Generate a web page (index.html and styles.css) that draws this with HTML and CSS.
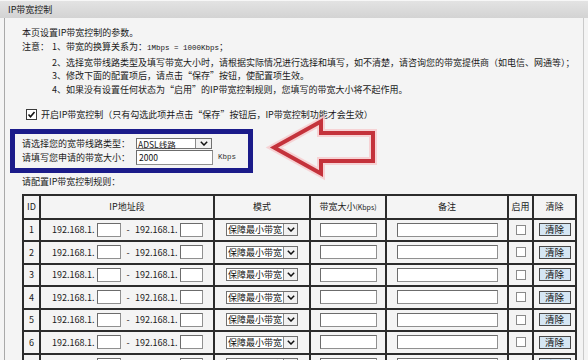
FILE: index.html
```html
<!DOCTYPE html>
<html lang="zh-CN">
<head>
<meta charset="utf-8">
<title>IP带宽控制</title>
<link rel="stylesheet" href="styles.css">
</head>
<body>
<div class="titlebar">IP带宽控制</div>
<div class="panel">
  <p class="line">本页设置IP带宽控制的参数。</p>
  <div class="notes">
    <span class="note-label">注意：</span>
    <div class="note-items">
      <p class="line">1、带宽的换算关系为：<span class="mono">1Mbps = 1000Kbps</span>；</p>
      <p class="line">2、选择宽带线路类型及填写带宽大小时，请根据实际情况进行选择和填写，如不清楚，请咨询您的带宽提供商（如电信、网通等）；</p>
      <p class="line">3、修改下面的配置项后，请点击<span class="q">“</span>保存<span class="q">”</span>按钮，使配置项生效。</p>
      <p class="line">4、如果没有设置任何状态为<span class="q">“</span>启用<span class="q">”</span>的IP带宽控制规则，您填写的带宽大小将不起作用。</p>
    </div>
  </div>
  <div class="enable-row">
    <span class="cb cb-checked"><svg viewBox="0 0 11 11" width="11" height="11"><rect x="0.5" y="0.5" width="10" height="10" fill="#fff" stroke="#3a3a3a"/><polyline points="2.5,5.5 4.5,7.8 8.5,3" fill="none" stroke="#111" stroke-width="1.6"/></svg></span>
    <span>开启IP带宽控制（只有勾选此项并点击<span class="q">“</span>保存<span class="q">”</span>按钮后，IP带宽控制功能才会生效）</span>
  </div>
  <div class="bwbox">
    <div class="bw-grid">
      <span class="bw-label">请选择您的宽带线路类型：</span>
      <span class="sel sel-adsl"><span class="sel-text">ADSL线路</span><span class="sel-btn"><svg viewBox="0 0 8 5" width="8" height="5"><polyline points="0.8,0.8 4,4 7.2,0.8" fill="none" stroke="#111" stroke-width="1.5"/></svg></span></span>
      <span></span>
      <span class="bw-label">请填写您申请的带宽大小：</span>
      <input class="txt txt-bw" type="text" value="2000">
      <span class="unit">Kbps</span>
    </div>
  </div>
  <p class="line rules-title">请配置IP带宽控制规则：</p>
  <table class="rules">
    <colgroup>
      <col class="c-id"><col class="c-ip"><col class="c-mode"><col class="c-bw"><col class="c-note"><col class="c-en"><col class="c-clr">
    </colgroup>
    <thead>
      <tr class="head-row">
        <th>ID</th><th>IP地址段</th><th>模式</th><th>带宽大小<span class="small">(Kbps)</span></th><th>备注</th><th>启用</th><th>清除</th>
      </tr>
    </thead>
    <tbody>
      <tr class="rule-row"><td>1</td><td><div class="ip"><span class="ip-pre">192.168.1.</span><input class="txt ip-in" type="text"><span class="dash">-</span><span class="ip-pre">192.168.1.</span><input class="txt ip-in2" type="text"></div></td><td><div class="cell-c"><span class="sel sel-mode"><span class="sel-text">保障最小带宽</span><span class="sel-btn"><svg viewBox="0 0 8 5" width="8" height="5"><polyline points="0.8,0.8 4,4 7.2,0.8" fill="none" stroke="#111" stroke-width="1.5"/></svg></span></span></div></td><td><div class="cell-c"><input class="txt in-bw" type="text"></div></td><td><div class="cell-c"><input class="txt in-note" type="text"></div></td><td><div class="cell-c"><span class="cb-empty"></span></div></td><td><div class="cell-c"><button class="btn-clear">清除</button></div></td></tr>
      <tr class="rule-row"><td>2</td><td><div class="ip"><span class="ip-pre">192.168.1.</span><input class="txt ip-in" type="text"><span class="dash">-</span><span class="ip-pre">192.168.1.</span><input class="txt ip-in2" type="text"></div></td><td><div class="cell-c"><span class="sel sel-mode"><span class="sel-text">保障最小带宽</span><span class="sel-btn"><svg viewBox="0 0 8 5" width="8" height="5"><polyline points="0.8,0.8 4,4 7.2,0.8" fill="none" stroke="#111" stroke-width="1.5"/></svg></span></span></div></td><td><div class="cell-c"><input class="txt in-bw" type="text"></div></td><td><div class="cell-c"><input class="txt in-note" type="text"></div></td><td><div class="cell-c"><span class="cb-empty"></span></div></td><td><div class="cell-c"><button class="btn-clear">清除</button></div></td></tr>
      <tr class="rule-row"><td>3</td><td><div class="ip"><span class="ip-pre">192.168.1.</span><input class="txt ip-in" type="text"><span class="dash">-</span><span class="ip-pre">192.168.1.</span><input class="txt ip-in2" type="text"></div></td><td><div class="cell-c"><span class="sel sel-mode"><span class="sel-text">保障最小带宽</span><span class="sel-btn"><svg viewBox="0 0 8 5" width="8" height="5"><polyline points="0.8,0.8 4,4 7.2,0.8" fill="none" stroke="#111" stroke-width="1.5"/></svg></span></span></div></td><td><div class="cell-c"><input class="txt in-bw" type="text"></div></td><td><div class="cell-c"><input class="txt in-note" type="text"></div></td><td><div class="cell-c"><span class="cb-empty"></span></div></td><td><div class="cell-c"><button class="btn-clear">清除</button></div></td></tr>
      <tr class="rule-row"><td>4</td><td><div class="ip"><span class="ip-pre">192.168.1.</span><input class="txt ip-in" type="text"><span class="dash">-</span><span class="ip-pre">192.168.1.</span><input class="txt ip-in2" type="text"></div></td><td><div class="cell-c"><span class="sel sel-mode"><span class="sel-text">保障最小带宽</span><span class="sel-btn"><svg viewBox="0 0 8 5" width="8" height="5"><polyline points="0.8,0.8 4,4 7.2,0.8" fill="none" stroke="#111" stroke-width="1.5"/></svg></span></span></div></td><td><div class="cell-c"><input class="txt in-bw" type="text"></div></td><td><div class="cell-c"><input class="txt in-note" type="text"></div></td><td><div class="cell-c"><span class="cb-empty"></span></div></td><td><div class="cell-c"><button class="btn-clear">清除</button></div></td></tr>
      <tr class="rule-row"><td>5</td><td><div class="ip"><span class="ip-pre">192.168.1.</span><input class="txt ip-in" type="text"><span class="dash">-</span><span class="ip-pre">192.168.1.</span><input class="txt ip-in2" type="text"></div></td><td><div class="cell-c"><span class="sel sel-mode"><span class="sel-text">保障最小带宽</span><span class="sel-btn"><svg viewBox="0 0 8 5" width="8" height="5"><polyline points="0.8,0.8 4,4 7.2,0.8" fill="none" stroke="#111" stroke-width="1.5"/></svg></span></span></div></td><td><div class="cell-c"><input class="txt in-bw" type="text"></div></td><td><div class="cell-c"><input class="txt in-note" type="text"></div></td><td><div class="cell-c"><span class="cb-empty"></span></div></td><td><div class="cell-c"><button class="btn-clear">清除</button></div></td></tr>
      <tr class="rule-row"><td>6</td><td><div class="ip"><span class="ip-pre">192.168.1.</span><input class="txt ip-in" type="text"><span class="dash">-</span><span class="ip-pre">192.168.1.</span><input class="txt ip-in2" type="text"></div></td><td><div class="cell-c"><span class="sel sel-mode"><span class="sel-text">保障最小带宽</span><span class="sel-btn"><svg viewBox="0 0 8 5" width="8" height="5"><polyline points="0.8,0.8 4,4 7.2,0.8" fill="none" stroke="#111" stroke-width="1.5"/></svg></span></span></div></td><td><div class="cell-c"><input class="txt in-bw" type="text"></div></td><td><div class="cell-c"><input class="txt in-note" type="text"></div></td><td><div class="cell-c"><span class="cb-empty"></span></div></td><td><div class="cell-c"><button class="btn-clear">清除</button></div></td></tr>
      <tr class="rule-row"><td>7</td><td><div class="ip"><span class="ip-pre">192.168.1.</span><input class="txt ip-in" type="text"><span class="dash">-</span><span class="ip-pre">192.168.1.</span><input class="txt ip-in2" type="text"></div></td><td><div class="cell-c"><span class="sel sel-mode"><span class="sel-text">保障最小带宽</span><span class="sel-btn"><svg viewBox="0 0 8 5" width="8" height="5"><polyline points="0.8,0.8 4,4 7.2,0.8" fill="none" stroke="#111" stroke-width="1.5"/></svg></span></span></div></td><td><div class="cell-c"><input class="txt in-bw" type="text"></div></td><td><div class="cell-c"><input class="txt in-note" type="text"></div></td><td><div class="cell-c"><span class="cb-empty"></span></div></td><td><div class="cell-c"><button class="btn-clear">清除</button></div></td></tr>
    </tbody>
  </table>
</div>
<svg class="arrow" viewBox="0 0 588 360" width="588" height="360">
  <path d="M274 147.5 L321 121.5 L321 133 L373 133 L373 161 L321 161 L321 173.5 Z" fill="none" stroke="#f6c9cc" stroke-width="8" stroke-linejoin="miter" opacity="0.8"/>
  <path d="M274 147.5 L321 121.5 L321 133 L373 133 L373 161 L321 161 L321 173.5 Z" fill="none" stroke="#c4323b" stroke-width="4" stroke-linejoin="miter"/>
</svg>
</body>
</html>
```

FILE: styles.css
```css
html, body {
  margin: 0;
  padding: 0;
}
body {
  position: relative;
  width: 588px;
  height: 360px;
  overflow: hidden;
  background: #f4f4f4;
  color: #1a1a1a;
  font-family: "Noto Sans CJK SC", "Liberation Sans", sans-serif;
  font-size: 9px;
}
.titlebar {
  height: 17px;
  line-height: 17px;
  padding-left: 8px;
  background: linear-gradient(#e3e3e3, #d3d3d3);
  border-top: 1px solid #f7f7f7;
  color: #222;
}
.panel {
  margin: 0 4px;
  height: 342px;
  overflow: hidden;
  border-left: 1px solid #a9a9a9;
  border-right: 1px solid #cacaca;
  padding: 8px 0 0 17px;
  box-sizing: border-box;
}
p.line {
  margin: 0;
  line-height: 13.75px;
  white-space: nowrap;
}
.q {
  font-feature-settings: "fwid";
}
.mono {
  font-family: "Liberation Mono", monospace;
  font-size: 7.5px;
}
.notes {
  display: flex;
}
.note-label {
  flex: none;
  width: 30px;
  line-height: 13.75px;
}
.enable-row {
  display: flex;
  align-items: center;
  gap: 4px;
  height: 14px;
  margin-top: 11px;
  padding-left: 4px;
  white-space: nowrap;
}
.cb {
  display: flex;
  width: 11px;
  height: 11px;
}
.bwbox {
  box-sizing: border-box;
  width: 243px;
  height: 44px;
  margin: 7px 0 0 -12px;
  border: 5px solid #1b1b8a;
  padding: 4px 0 0 7px;
}
.bw-grid {
  display: grid;
  grid-template-columns: 114px auto auto;
  grid-template-rows: 12px 15px;
  justify-content: start;
  align-items: center;
}
.bw-label {
  white-space: nowrap;
}
.unit {
  margin-left: 5px;
  font-family: "Liberation Mono", monospace;
  font-size: 7.5px;
  color: #333;
}
.sel {
  display: inline-flex;
  box-sizing: border-box;
  align-items: stretch;
  border: 1px solid #707070;
  background: #fff;
}
.sel-text {
  flex: 1;
  min-width: 0;
  padding-left: 1px;
  white-space: nowrap;
  display: flex;
  align-items: center;
}
.sel-btn {
  flex: none;
  width: 13px;
  display: flex;
  align-items: center;
  justify-content: center;
  border-left: 1px solid #8a8a8a;
  background: #f1f1f1;
}
.sel-adsl {
  width: 76px;
  height: 11px;
  font-size: 8.5px;
}
.sel-adsl .sel-btn {
  width: 15px;
}
.sel-mode {
  width: 72px;
  height: 13px;
  font-size: 9px;
  color: #111;
}
.sel-mode .sel-text {
  padding-left: 1px;
}
.txt {
  display: block;
  box-sizing: border-box;
  height: 14px;
  margin: 0;
  padding: 0 2px;
  border: 1px solid #909090;
  border-top-color: #6c6c6c;
  border-left-color: #6c6c6c;
  background: #fff;
  font: inherit;
  color: #111;
  outline: none;
}
.txt-bw {
  width: 77px;
  height: 15px;
  font-size: 8.5px;
}
.rules-title {
  margin-top: 2px !important;
}
.rules {
  margin-top: 5px;
  width: 555px;
  border-collapse: collapse;
  table-layout: fixed;
}
.c-id { width: 17px; }
.c-ip { width: 174px; }
.c-mode { width: 96px; }
.c-bw { width: 76px; }
.c-note { width: 122px; }
.c-en { width: 25px; }
.c-clr { width: 43px; }
.rules th,
.rules td {
  border: 2px solid #2c2c2c;
  padding: 0;
  text-align: center;
  font-weight: normal;
  white-space: nowrap;
}
.head-row { height: 24px; }
.rule-row { height: 22.5px; }
.small {
  font-size: 7px;
}
.ip {
  display: flex;
  align-items: center;
  padding-left: 11px;
}
.ip-pre {
  width: 45px;
  text-align: left;
}
.ip-in { width: 24px; }
.ip-in2 { width: 23px; }
.dash {
  width: 14px;
  text-align: center;
}
.cell-c {
  display: flex;
  align-items: center;
  justify-content: center;
}
.in-bw { width: 57px; }
.in-note { width: 101px; }
.cb-empty {
  display: block;
  box-sizing: border-box;
  width: 10px;
  height: 10px;
  border: 1px solid #8a8a8a;
  background: #fff;
}
.btn-clear {
  box-sizing: border-box;
  width: 32px;
  height: 13px;
  margin: 0;
  padding: 0;
  border: 1px solid #4a4a4a;
  background: #d5e6f3;
  font: inherit;
  font-size: 9.5px;
  line-height: 11px;
  color: #111;
}
.arrow {
  position: absolute;
  left: 0;
  top: 0;
  pointer-events: none;
}
```
